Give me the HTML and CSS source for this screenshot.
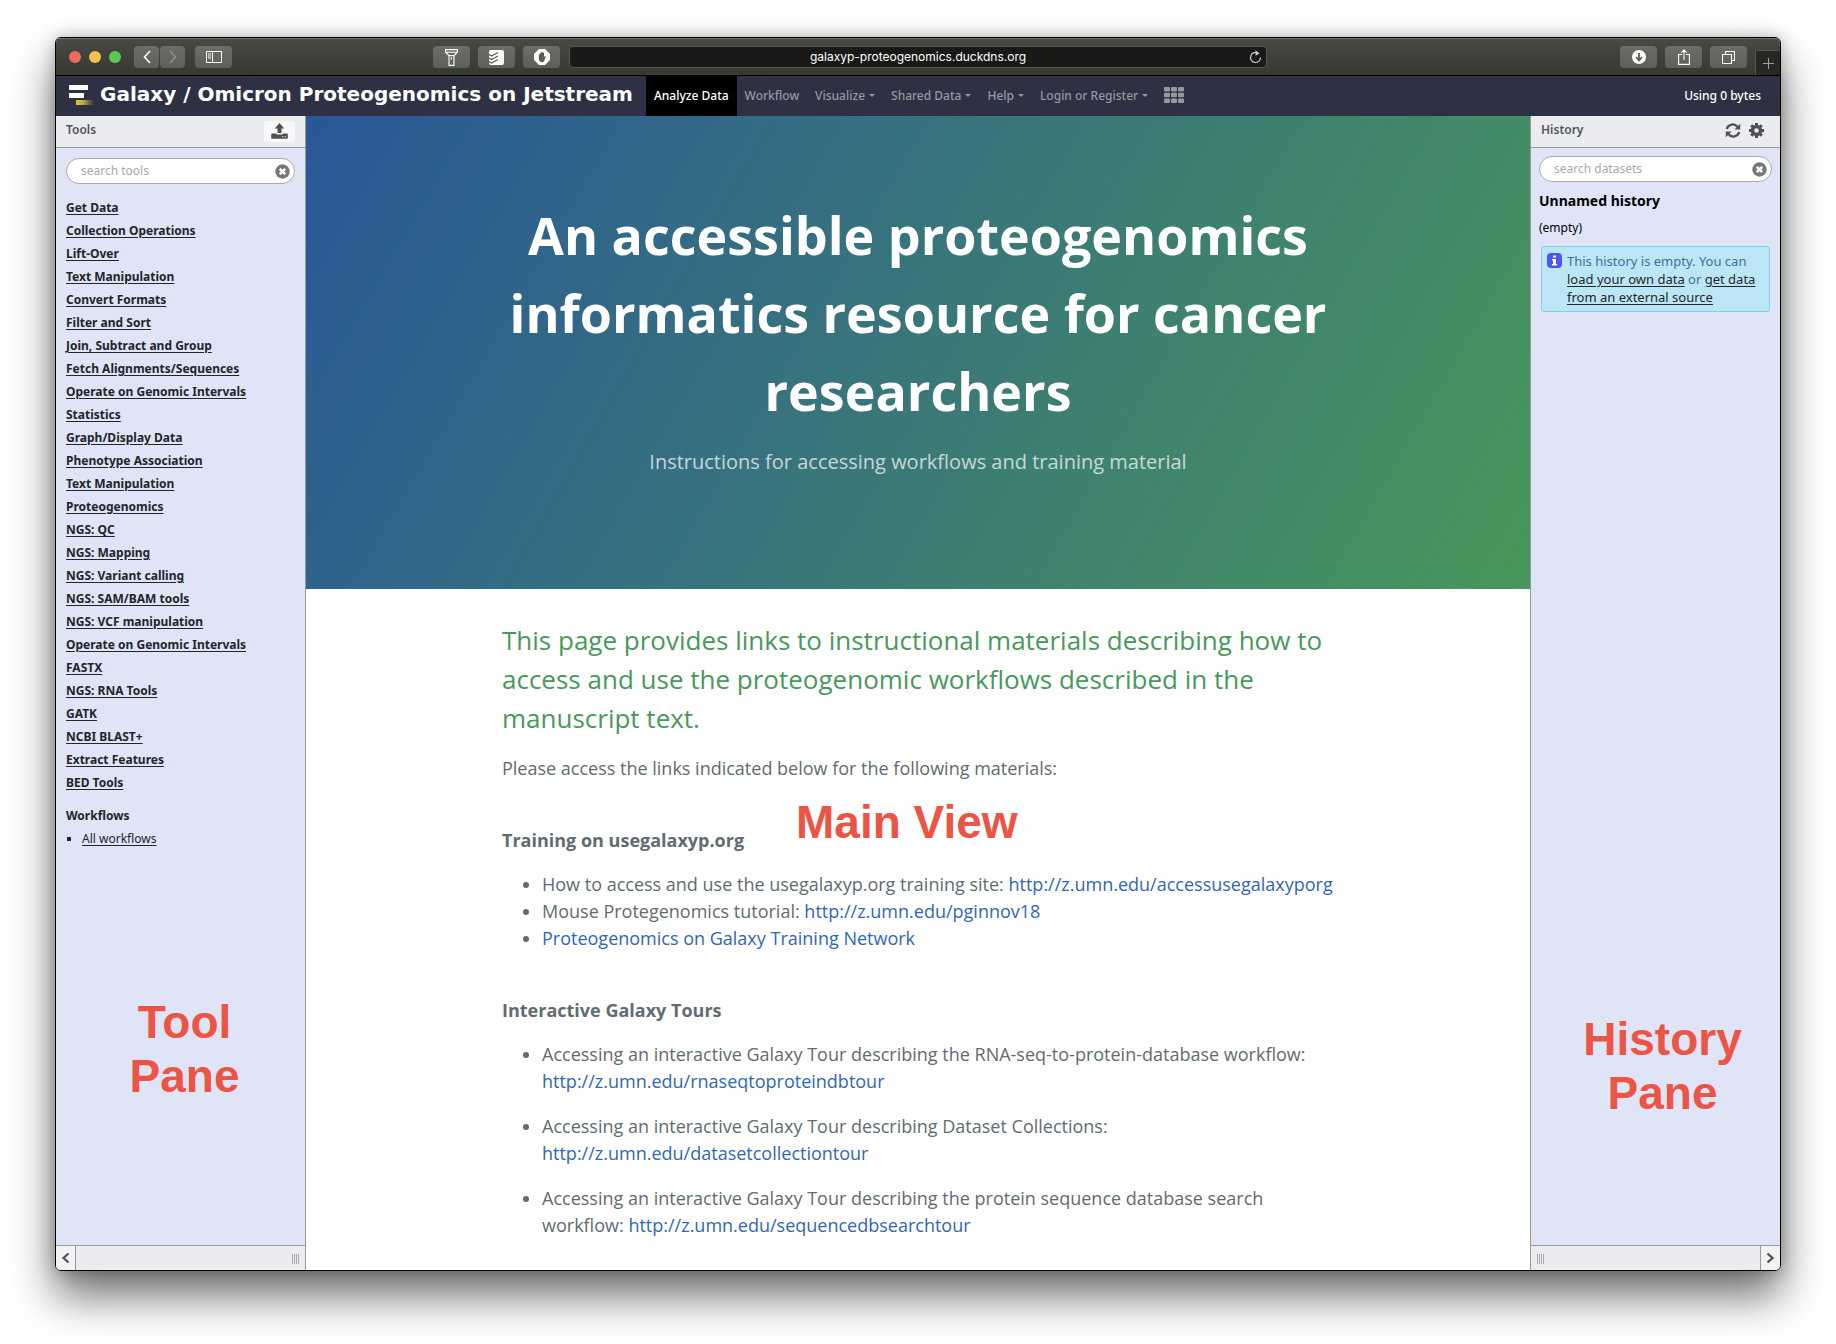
FILE: index.html
```html
<!DOCTYPE html>
<html lang="en">
<head>
<meta charset="utf-8">
<title>Galaxy / Omicron Proteogenomics on Jetstream</title>
<link rel="stylesheet" href="styles.css">
</head>
<body>
<div class="window">
  <div class="toolbar">
    <div class="toolbar-left">
      <div class="lights"><span class="light light-red"></span><span class="light light-yellow"></span><span class="light light-green"></span></div>
      <div class="nav-pair">
        <button class="tool-btn nav-btn" type="button" aria-label="Back"><svg width="8" height="14" viewBox="0 0 8 14"><path d="M7 1 1.500 7 7 13" fill="none" stroke="#fff" stroke-width="1.600"/></svg></button>
        <button class="tool-btn nav-btn" type="button" aria-label="Forward"><svg width="8" height="14" viewBox="0 0 8 14"><path d="M1 1 6.500 7 1 13" fill="none" stroke="#92938e" stroke-width="1.400"/></svg></button>
      </div>
      <button class="tool-btn" type="button" aria-label="Show sidebar"><svg width="16" height="12" viewBox="0 0 16 12"><path d="M.5.500h15v11H.500zM6.500.500v11M2 3h3M2 5h3M2 7h3" fill="none" stroke="#fff"/></svg></button>
      <div class="toolbar-ext">
        <button class="tool-btn" type="button" aria-label="Flashlight"><svg width="13" height="17" viewBox="0 0 13 17"><path d="M.6.600h11.800v2.600L9 6.600v9.800H4V6.600L.600 3.200zM.600 3.200h11.800M4 6.600h5" fill="none" stroke="#fff" stroke-width="1.100"/><path d="M5.800 8.500h1.400v2H5.800z" fill="#fff"/></svg></button>
        <button class="tool-btn" type="button" aria-label="Tasks"><svg width="15" height="15" viewBox="0 0 15 15"><rect width="15" height="15" rx="2" fill="#fff"/><path d="M0 4.500 2.500 6 9 2.500M0 8 2.500 9.500 9 6M0 11.500 2.500 13 9 9.500" fill="none" stroke="#5b5d57" stroke-width="1.200"/></svg></button>
        <button class="tool-btn" type="button" aria-label="Blocker"><svg width="16" height="16" viewBox="0 0 16 16"><path d="M5 0h6l5 5v6l-5 5H5l-5-5V5z" fill="#fff"/><path d="M4.800 8.500V5.500q.700-.700 1.300 0V3.900q.700-.800 1.300 0v-.700q.700-.700 1.300 0v.700q.700-.700 1.300 0V8l1.200-1q.900 0 .600.800L10 12.300q-2 1.700-4.200 0Q4.800 11 4.800 8.500z" fill="#5b5d57"/></svg></button>
      </div>
    </div>
    <div class="address">
      <input class="address-input" type="text" aria-label="Address" value="galaxyp-proteogenomics.duckdns.org">
      <button class="reload" type="button" aria-label="Reload"><svg width="13" height="14" viewBox="0 0 13 14"><path d="M9.500 3.500A5 5 0 1 0 11.500 7.500" fill="none" stroke="#ccc" stroke-width="1.200"/><path d="M6.500.300 10.500 3.600 6.500 5.800z" fill="#ccc"/></svg></button>
    </div>
    <div class="toolbar-right">
      <button class="tool-btn" type="button" aria-label="Downloads"><svg width="14" height="14" viewBox="0 0 14 14"><circle cx="7" cy="7" r="7" fill="#fff"/><path d="M7 3v7M4 7l3 3.300L10 7" fill="none" stroke="#5b5d57" stroke-width="1.800"/></svg></button>
      <button class="tool-btn" type="button" aria-label="Share"><svg width="12" height="16" viewBox="0 0 12 16"><path d="M4 5.500H.600v9.900h10.800V5.500H8M6 11V1M3.300 3.600 6 1l2.700 2.600" fill="none" stroke="#fff" stroke-width="1.100"/></svg></button>
      <button class="tool-btn" type="button" aria-label="Show tabs"><svg width="13" height="13" viewBox="0 0 13 13"><path d="M.5 3.500h9v9h-9zM3.500 3.500v-3h9v9h-3" fill="none" stroke="#fff" stroke-width="1.100"/></svg></button>
      <button class="new-tab" type="button" aria-label="New tab"><svg width="11" height="11" viewBox="0 0 11 11"><path d="M5.500 0v11M0 5.500h11" stroke="#a4a5a1"/></svg></button>
    </div>
  </div>

  <header class="masthead">
    <a class="brand" href="#">
      <svg width="25" height="23" viewBox="0 0 25 23"><defs><linearGradient id="gold"><stop offset="0" stop-color="#d8c63c"/><stop offset=".4" stop-color="#bda93a"/><stop offset="1" stop-color="#2e3143"/></linearGradient></defs><path d="M0 0h19v5H0zM0 8h15v5H0z" fill="#fff"/><path d="M7 15h18v5H7z" fill="url(#gold)"/></svg>
      <span>Galaxy / Omicron Proteogenomics on Jetstream</span>
    </a>
    <nav class="menu">
      <a class="menu-item active" href="#">Analyze Data</a>
      <a class="menu-item" href="#">Workflow</a>
      <a class="menu-item caret" href="#">Visualize</a>
      <a class="menu-item caret" href="#">Shared Data</a>
      <a class="menu-item caret" href="#">Help</a>
      <a class="menu-item caret" href="#">Login or Register</a>
      <a class="menu-item" href="#" aria-label="Apps"><svg width="20" height="16" viewBox="0 0 20 16" fill="#96979f"><rect width="6" height="4.600" rx="1"/><rect x="7" width="6" height="4.600" rx="1"/><rect x="14" width="6" height="4.600" rx="1"/><rect y="5.700" width="6" height="4.600" rx="1"/><rect x="7" y="5.700" width="6" height="4.600" rx="1"/><rect x="14" y="5.700" width="6" height="4.600" rx="1"/><rect y="11.400" width="6" height="4.600" rx="1"/><rect x="7" y="11.400" width="6" height="4.600" rx="1"/><rect x="14" y="11.400" width="6" height="4.600" rx="1"/></svg></a>
    </nav>
    <span class="quota">Using 0 bytes</span>
  </header>

  <div class="columns">
    <aside class="panel panel-left">
      <div class="panel-head">
        <h2 class="panel-title">Tools</h2>
        <button class="upload" type="button" aria-label="Upload data"><svg width="17" height="16" viewBox="0 0 17 16" fill="#505050"><path d="M8.500 0 13.300 5.500H10.500V10h-4V5.500H3.700z"/><path fill-rule="evenodd" d="M1 10.500h4.500V11.500h6v-1H16q.800 0 .800.800v3.600q0 .800-.800.800H1q-.800 0-.800-.800v-3.600q0-.800.800-.800zM11 13.200v1h1.200v-1zm2.600 0v1h1.200v-1z"/></svg></button>
      </div>
      <div class="panel-body tools-body">
        <div class="search">
          <input class="search-input" type="text" placeholder="search tools" aria-label="search tools">
          <button class="clear" type="button" aria-label="Clear"><svg width="15" height="15" viewBox="0 0 15 15"><circle cx="7.500" cy="7.500" r="7.200" fill="#777"/><path d="M4.800 4.800l5.400 5.400M10.200 4.800l-5.400 5.400" stroke="#fff" stroke-width="2.600"/></svg></button>
        </div>
        <ul class="tool-list">
          <li><a href="#">Get Data</a></li>
          <li><a href="#">Collection Operations</a></li>
          <li><a href="#">Lift-Over</a></li>
          <li><a href="#">Text Manipulation</a></li>
          <li><a href="#">Convert Formats</a></li>
          <li><a href="#">Filter and Sort</a></li>
          <li><a href="#">Join, Subtract and Group</a></li>
          <li><a href="#">Fetch Alignments/Sequences</a></li>
          <li><a href="#">Operate on Genomic Intervals</a></li>
          <li><a href="#">Statistics</a></li>
          <li><a href="#">Graph/Display Data</a></li>
          <li><a href="#">Phenotype Association</a></li>
          <li><a href="#">Text Manipulation</a></li>
          <li><a href="#">Proteogenomics</a></li>
          <li><a href="#">NGS: QC</a></li>
          <li><a href="#">NGS: Mapping</a></li>
          <li><a href="#">NGS: Variant calling</a></li>
          <li><a href="#">NGS: SAM/BAM tools</a></li>
          <li><a href="#">NGS: VCF manipulation</a></li>
          <li><a href="#">Operate on Genomic Intervals</a></li>
          <li><a href="#">FASTX</a></li>
          <li><a href="#">NGS: RNA Tools</a></li>
          <li><a href="#">GATK</a></li>
          <li><a href="#">NCBI BLAST+</a></li>
          <li><a href="#">Extract Features</a></li>
          <li><a href="#">BED Tools</a></li>
        </ul>
        <h3 class="workflows-title">Workflows</h3>
        <ul class="workflow-list"><li><a href="#">All workflows</a></li></ul>
      </div>
      <div class="panel-foot">
        <button class="collapse" type="button" aria-label="Collapse tools"><svg width="9" height="12" viewBox="0 0 9 12"><path d="M7.500 1.500 2.500 6l5 4.500" fill="none" stroke="#505050" stroke-width="2.200"/></svg></button>
        <span class="grip"></span>
      </div>
      <div class="note note-tool">Tool<br>Pane</div>
    </aside>

    <main class="center">
      <section class="hero">
        <h1>An accessible proteogenomics informatics resource for cancer researchers</h1>
        <p>Instructions for accessing workflows and training material</p>
      </section>
      <section class="content">
        <h2>This page provides links to instructional materials describing how to access and use the proteogenomic workflows described in the manuscript text.</h2>
        <p>Please access the links indicated below for the following materials:</p>
        <h3>Training on usegalaxyp.org</h3>
        <ul>
          <li>How to access and use the usegalaxyp.org training site: <a href="#">http://z.umn.edu/accessusegalaxyporg</a></li>
          <li>Mouse Protegenomics tutorial: <a href="#">http://z.umn.edu/pginnov18</a></li>
          <li><a href="#">Proteogenomics on Galaxy Training Network</a></li>
        </ul>
        <h3>Interactive Galaxy Tours</h3>
        <ul class="spaced">
          <li>Accessing an interactive Galaxy Tour describing the RNA-seq-to-protein-database workflow: <a href="#">http://z.umn.edu/rnaseqtoproteindbtour</a></li>
          <li>Accessing an interactive Galaxy Tour describing Dataset Collections: <a href="#">http://z.umn.edu/datasetcollectiontour</a></li>
          <li>Accessing an interactive Galaxy Tour describing the protein sequence database search workflow: <a href="#">http://z.umn.edu/sequencedbsearchtour</a></li>
        </ul>
      </section>
      <div class="note note-main">Main View</div>
    </main>

    <aside class="panel panel-right">
      <div class="panel-head">
        <h2 class="panel-title">History</h2>
        <div class="head-icons">
          <button class="icon-btn" type="button" aria-label="Refresh"><svg width="16" height="15" viewBox="0 0 16 15"><path d="M1.800 6A6 6 0 0 1 12.500 4M14.200 9A6 6 0 0 1 3.500 11" fill="none" stroke="#505050" stroke-width="2.300"/><path d="M15.200.800v5.700H9.500zM.800 14.200V8.500h5.700z" fill="#505050"/></svg></button>
          <button class="icon-btn" type="button" aria-label="History options"><svg width="15" height="15" viewBox="0 0 15 15"><circle cx="7.500" cy="7.500" r="4" fill="none" stroke="#505050" stroke-width="3.400"/><path d="M7.500 0v3M7.500 12v3M0 7.500h3M12 7.500h3M2.200 2.200l2 2M10.800 10.800l2 2M2.200 12.800l2-2M10.800 4.200l2-2" stroke="#505050" stroke-width="3"/></svg></button>
        </div>
      </div>
      <div class="panel-body history-body">
        <div class="search">
          <input class="search-input" type="text" placeholder="search datasets" aria-label="search datasets">
          <button class="clear" type="button" aria-label="Clear"><svg width="15" height="15" viewBox="0 0 15 15"><circle cx="7.500" cy="7.500" r="7.200" fill="#777"/><path d="M4.800 4.800l5.400 5.400M10.200 4.800l-5.400 5.400" stroke="#fff" stroke-width="2.600"/></svg></button>
        </div>
        <h3 class="history-name">Unnamed history</h3>
        <p class="history-size">(empty)</p>
        <div class="info">
          <svg class="info-icon" width="15" height="15" viewBox="0 0 15 15"><rect width="15" height="15" rx="4" fill="#4b55f5"/><path d="M6 2.500h3v2H6zM5 6h4v5h1.200v1.600H4.900V11H6V7.500H5z" fill="#fff"/></svg>
          <p>This history is empty. You can <a href="#">load your own data</a> or <a href="#">get data from an external source</a></p>
        </div>
      </div>
      <div class="panel-foot">
        <span class="grip"></span>
        <button class="collapse" type="button" aria-label="Collapse history"><svg width="9" height="12" viewBox="0 0 9 12"><path d="M1.500 1.500l5 4.500-5 4.500" fill="none" stroke="#505050" stroke-width="2.200"/></svg></button>
      </div>
      <div class="note note-history">History<br>Pane</div>
    </aside>
  </div>
</div>
</body>
</html>
```
FILE: styles.css
```css
* { box-sizing: border-box; }

body {
  margin: 0;
  min-height: 100vh;
  display: flex;
  padding: 37px 55px 73px;
  background: #fff;
  font-family: "Noto Sans", "Open Sans", sans-serif;
  font-size: 12px;
  color: #222629;
}

h1, h2, h3, p, ul { margin: 0; padding: 0; }

button {
  border: 0;
  padding: 0;
  background: none;
  display: flex;
  align-items: center;
  justify-content: center;
}

/* Browser window */
.window {
  flex: 1;
  min-width: 0;
  display: flex;
  flex-direction: column;
  border: 1px solid #000;
  border-radius: 6px;
  overflow: hidden;
  background: #fff;
  box-shadow: 0 25px 44px rgba(0, 0, 0, .57), 0 0 16px rgba(0, 0, 0, .25);
}

.toolbar {
  display: grid;
  grid-template-columns: minmax(0, 1fr) minmax(0, 698px) minmax(0, 1fr);
  align-items: center;
  height: 38px;
  background: linear-gradient(#474942, #363831);
  border-top: 1px solid #74756f;
  border-bottom: 1px solid #000;
}

.toolbar-left, .toolbar-right { display: flex; align-items: center; }
.toolbar-left { padding: 0 9px 0 13px; }
.lights { display: flex; gap: 8px; margin-right: 13px; }
.light { width: 12px; height: 12px; border-radius: 50%; }
.light-red { background: #ed6a5e; }
.light-yellow { background: #f5bf4f; }
.light-green { background: #61c554; }
.nav-pair { display: flex; gap: 1px; margin-right: 10px; }

.tool-btn {
  width: 37px;
  height: 22px;
  border-radius: 4px;
  background: linear-gradient(#6b6d68, #5d5f59);
}
.nav-btn { width: 25px; }

.toolbar-ext { display: flex; gap: 8px; margin-left: auto; }

.address {
  display: flex;
  align-items: center;
  height: 22px;
  border: 1px solid #55564f;
  border-radius: 4px;
  background: #191917;
  padding-right: 4px;
}
.address-input {
  flex: 1;
  min-width: 0;
  border: 0;
  padding: 0 0 0 17px;
  background: none;
  color: #fff;
  text-align: center;
  font: 12px/18px Inter, sans-serif;
}

.toolbar-right { justify-content: flex-end; gap: 8px; align-self: stretch; }
.new-tab {
  align-self: flex-end;
  width: 25px;
  height: 25px;
  background: #272824;
  border: 1px solid #555650;
  border-width: 1px 0 0 1px;
}

/* Masthead */
.masthead {
  display: flex;
  height: 40px;
  background: #2e3143;
  font-weight: 500;
}
.brand {
  display: flex;
  align-items: center;
  gap: 6px;
  padding: 0 13px 4px 13px;
  color: #fff;
  text-decoration: none;
  white-space: nowrap;
  font: bold 20px/24px "DejaVu Sans", sans-serif;
}
.brand svg { margin-top: 4px; }
.menu { display: flex; }
.menu-item {
  display: flex;
  align-items: center;
  padding: 0 8px 2px;
  color: #96979f;
  text-decoration: none;
  white-space: nowrap;
}
.menu-item.active { background: #000; color: #fff; }
.caret::after {
  content: "";
  margin-left: 4px;
  border: 3px solid transparent;
  border-top-color: currentColor;
  border-bottom: 0;
}
.quota { margin-left: auto; padding: 0 19px 2px 0; align-self: center; color: #fff; }

/* Three columns */
.columns {
  flex: 1;
  display: grid;
  grid-template-columns: 250px minmax(0, 1fr) 250px;
}
.panel { position: relative; display: flex; flex-direction: column; background: #dfe4f7; }
.panel-left { border-right: 1px solid #999; }
.panel-right { border-left: 1px solid #999; }

.panel-head {
  display: flex;
  justify-content: space-between;
  height: 32px;
  padding: 5px 10px;
  background: #ebecf0;
  border-bottom: 1px solid #999;
}
.panel-title { font-size: 12px; line-height: 18px; font-weight: 600; color: #555; }
.upload { width: 31px; height: 21px; padding-bottom: 2px; border-radius: 4px; background: #f8f8f8; }
.head-icons { display: flex; gap: 8px; padding: 0 6px 2px 0; }

.panel-body { flex: 1; }
.tools-body { padding: 10px; }
.history-body { padding: 8px; }

.search {
  display: flex;
  align-items: center;
  height: 26px;
  padding: 0 4px 0 14px;
  background: #fff;
  border: 1px solid #aaa;
  border-radius: 13px;
}
.search-input {
  flex: 1;
  min-width: 0;
  border: 0;
  padding: 0;
  background: none;
  font: 12px/18px "Noto Sans", "Open Sans", sans-serif;
}
.search-input::placeholder { color: #a9a9a9; opacity: 1; }

.tool-list { margin-top: 12px; list-style: none; line-height: 23px; font-weight: 700; }
.panel-body a { color: #222629; text-underline-offset: 2px; }
.workflows-title { margin-top: 10px; font-size: 12px; line-height: 23px; font-weight: 700; }
.workflow-list { list-style: square; padding-left: 16px; line-height: 23px; }

.history-name { margin-top: 9px; font-size: 14px; line-height: 20px; font-weight: 700; color: #000; }
.history-size { margin: 7px 0 8px; line-height: 20px; color: #000; }
.info {
  display: flex;
  gap: 5px;
  margin: 0 2px;
  padding: 5px;
  border: 1px solid #80cdec;
  border-radius: 3px;
  background: #bce6f6;
  color: #36749a;
  font-size: 13px;
  line-height: 18px;
}
.info-icon { flex: none; margin-top: 1px; }

.panel-foot {
  display: flex;
  justify-content: space-between;
  align-items: center;
  height: 25px;
  background: #ebecf0;
  border-top: 1px solid #999;
}
.collapse { width: 20px; align-self: stretch; background: #f2f2f4; border: 0 solid #999; }
.panel-left .collapse { border-right-width: 1px; }
.panel-right .collapse { border-left-width: 1px; }
.grip {
  width: 7px;
  height: 10px;
  margin: 2px 6px 0;
  background: repeating-linear-gradient(90deg, #aaa 0 1px, transparent 1px 2px);
}

/* Center page */
.center {
  position: relative;
  background: #fff;
  font-family: "Open Sans", sans-serif;
  color: #606c71;
}
.hero {
  padding: 80px 96px;
  text-align: center;
  color: #fff;
  background: linear-gradient(120deg, #2a5797, #49975b);
}
.hero h1 { font-size: 52px; line-height: 78px; font-weight: 700; }
.hero p { margin: 17px 0 32px; font-size: 20px; line-height: 30px; opacity: .7; }

.content {
  max-width: 1024px;
  margin: 0 auto;
  padding: 32px 96px 16px;
  font-size: 18px;
  line-height: 27px;
}
.content h2 { margin-bottom: 17px; font-size: 26px; line-height: 39px; font-weight: 400; color: #47995b; }
.content h3 { margin: 45px 0 17px; font-size: 18px; line-height: 27px; font-weight: 700; }
.content ul { padding-left: 40px; }
.content a { color: #2f67b3; text-decoration: none; }
.spaced { display: grid; gap: 18px; }

/* Labels laid over the three areas */
.note {
  position: absolute;
  text-align: center;
  white-space: nowrap;
  color: #eb5545;
  font: bold 46px/54px "Liberation Sans", Arial, sans-serif;
}
.note-tool { top: 879px; left: 4px; width: 100%; }
.note-history { top: 896px; left: 7px; width: 100%; }
.note-main { top: 679px; left: 490px; }
```
